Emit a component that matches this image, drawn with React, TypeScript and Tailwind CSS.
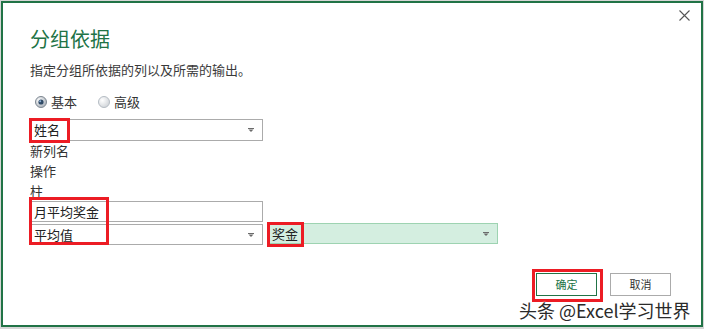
import React from "react";

const Arrow = () => (
  <svg width="6" height="4" viewBox="0 0 6 4" className="block">
    <rect x="0" y="0" width="6" height="1" fill="#6b6b6b" />
    <path d="M0.5 1.5 H5.5 L3 4 Z" fill="#6b6b6b" />
  </svg>
);

const Radio = ({ checked }: { checked: boolean }) => (
  <svg width="12" height="12" viewBox="0 0 12 12" className="block">
    <defs>
      <radialGradient id={checked ? "rg1" : "rg2"} cx="0.35" cy="0.35" r="0.8">
        <stop offset="0" stopColor="#ffffff" />
        <stop offset="1" stopColor={checked ? "#9aa3ad" : "#c9ced3"} />
      </radialGradient>
    </defs>
    <circle cx="6" cy="6" r="5.5" fill={`url(#${checked ? "rg1" : "rg2"})`} stroke={checked ? "#7d8791" : "#b5bcc3"} strokeWidth="1" />
    {checked && <circle cx="6" cy="6" r="2.6" fill="#2f4a66" />}
    {checked && <circle cx="5.2" cy="5.2" r="1" fill="#8fb1d6" />}
  </svg>
);

const RedBox = ({ cls }: { cls: string }) => (
  <div className={`pointer-events-none absolute border-[3px] border-[#ec1c24] ${cls}`} />
);

export default function App() {
  return (
    <div className="w-[704px] h-[329px] overflow-hidden bg-[#d6d6d6] pt-[1px] pl-[1px] font-['Noto_Sans_CJK_SC','Microsoft_YaHei',sans-serif]">
      <div className="relative flex h-[326px] w-[702px] flex-col border-2 border-[#217346] bg-white">
        <div className="flex justify-end pr-[11px] pt-[7px]">
          <svg width="11" height="11" viewBox="0 0 11 11" className="block">
            <path d="M0.5 0.5 L10.5 10.5 M10.5 0.5 L0.5 10.5" stroke="#555" strokeWidth="1.1" />
          </svg>
        </div>

        <div className="flex flex-col pl-[27px]">
          <div className="mt-[6px] text-[20px] leading-[24px] text-[#217346]">分组依据</div>
          <div className="mt-[10px] text-[13px] leading-[18px] text-[#3a3a3a]">
            指定分组所依据的列以及所需的输出。
          </div>

          <div className="mt-[14px] flex h-[18px] items-center pl-[5px] text-[13px] leading-[18px] text-[#333]">
            <Radio checked />
            <span className="ml-[4px]">基本</span>
            <span className="ml-[21px]"><Radio checked={false} /></span>
            <span className="ml-[4px]">高级</span>
          </div>

          <div className="relative mt-[8px] flex h-[22px] w-[233px] items-center justify-between border border-[#ababab] pl-[3px] pr-[8px] text-[13px] text-[#222]">
            <span>姓名</span>
            <Arrow />
            <RedBox cls="-left-[2px] -top-[2px] h-[25px] w-[41px]" />
          </div>

          <div className="text-[13px] leading-[20px] text-[#333]">新列名</div>
          <div className="text-[13px] leading-[20px] text-[#333]">操作</div>
          <div className="text-[13px] leading-[20px] text-[#333]">柱</div>

          <div className="flex items-start gap-[5px]">
            <div className="relative flex flex-col">
              <div className="flex h-[21px] w-[233px] items-center border border-[#ababab] pl-[3px] text-[13px] text-[#222]">
                月平均奖金
              </div>
              <div className="mt-[2px] flex h-[21px] w-[233px] items-center justify-between border border-[#ababab] pl-[3px] pr-[8px] text-[13px] text-[#222]">
                <span>平均值</span>
                <Arrow />
              </div>
              <RedBox cls="-left-[1px] -top-[4px] h-[48px] w-[80px]" />
            </div>
            <div className="relative mt-[22px] flex h-[21px] w-[230px] items-center justify-between border border-[#9dd3b1] bg-[#d4eee0] pl-[3px] pr-[8px] text-[13px] text-[#222]">
              <span>奖金</span>
              <Arrow />
              <RedBox cls="-left-[2px] -top-[2px] h-[25px] w-[37px]" />
            </div>
          </div>
        </div>

        <div className="mt-auto mb-[29px] flex justify-end gap-[13px] pr-[30px]">
          <div className="relative flex h-[23px] w-[61px] items-center justify-center border border-[#217346] bg-white text-[11px] text-[#217346]">
            确定
            <RedBox cls="-left-[5px] -top-[5px] h-[33px] w-[71px]" />
          </div>
          <div className="flex h-[23px] w-[61px] items-center justify-center border border-[#ababab] bg-white text-[11px] text-[#333]">
            取消
          </div>
        </div>

        <div className="pointer-events-none absolute left-[516px] top-[296px] whitespace-nowrap text-[18px] leading-[22px] text-[#2a2a2a] [text-shadow:0_0_2px_#fff,0_0_2px_#fff]">
          头条 @Excel学习世界
        </div>
      </div>
    </div>
  );
}
